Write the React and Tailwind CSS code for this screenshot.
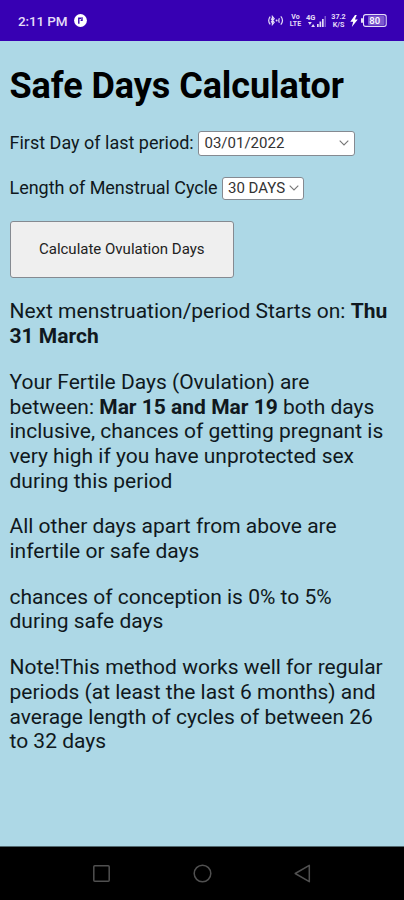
function Chevron() {
  return (
    <svg width="10" height="6" viewBox="0 0 10 6" fill="none" stroke="#777" strokeWidth="1.1">
      <path d="M.7.7 5 5 9.3.7" />
    </svg>
  );
}

function StatusBar() {
  return (
    <header className="flex h-[41px] items-center bg-[#3700b3] pl-[18px] pr-[17px] text-[#e4dcf7]">
      <span className="w-[50px] text-[13.5px] leading-4 font-medium tracking-[-0.12px] whitespace-nowrap">2:11 PM</span>
      <svg className="ml-[6px]" width="13" height="13" viewBox="0 0 13 13">
        <circle cx="6.5" cy="6.5" r="6.4" fill="#fff" />
        <path d="M4.8 9.8V4.2H7M8 3.2v3.2H6.6" fill="none" stroke="#3700b3" strokeWidth="1.4" />
      </svg>
      <div className="ml-auto flex items-center">
        <svg width="16" height="11" viewBox="0 0 16 11" fill="none" stroke="currentColor" strokeWidth="1.2">
          <path d="M2.2 1.6Q-.8 5.5 2.2 9.4M3 3.6l3.2 3.7-1.8 2.2v-8l1.8 2.2L3 7.4M11.4 3.2q-1.2 2.3 0 4.6M12.8 1.4q3.4 4.1 0 8.2" />
          <circle cx="8.6" cy="5.5" r="1" fill="currentColor" stroke="none" />
        </svg>
        <span className="ml-[5px] flex w-[13px] flex-col items-center text-[7px] leading-[7px] font-bold"><span>Vo</span><span>LTE</span></span>
        <div className="ml-[4px] flex items-end">
          <div className="flex w-[11px] flex-col items-start">
            <span className="text-[7.5px] leading-[8px] font-bold">4G</span>
            <svg className="ml-[2px]" width="7" height="5" viewBox="0 0 7 5" fill="currentColor"><path d="M0 0h3.8L1.9 3zM3.2 5H7L5.1 2z" /></svg>
          </div>
          <svg width="9" height="12" viewBox="0 0 9 12" fill="currentColor">
            <path d="M0 9h1.7v3H0zM2.5 6.5h1.7V12H2.5zM5 4h1.7v8H5z" />
            <path d="M7.6 1h1.2v11H7.6z" opacity=".5" />
          </svg>
        </div>
        <span className="ml-[5px] flex w-[15px] flex-col items-center text-[7.2px] leading-[8px] font-bold"><span>37.2</span><span>K/S</span></span>
        <svg className="ml-[4px]" width="8" height="12" viewBox="0 0 8 12"><path d="M5 0 .3 6.8h2.9L1.8 12l6-7.4H4.9L6.8 0z" fill="#fff" /></svg>
        <svg className="ml-[3px]" width="26" height="13" viewBox="0 0 26 13">
          <rect x="2.5" y=".6" width="22.7" height="11.8" rx="2.2" fill="none" stroke="currentColor" strokeWidth="1.1" />
          <rect x="0" y="4" width="2" height="5" rx="1" fill="currentColor" />
          <rect x="7" y="2" width="16.6" height="9" rx="1" fill="currentColor" opacity=".4" />
          <text x="13.7" y="10" textAnchor="middle" fontSize="9.5" fontWeight="500" fill="#fff">80</text>
        </svg>
      </div>
    </header>
  );
}

export default function App() {
  return (
    <div className="flex h-[900px] w-[404px] flex-col overflow-hidden bg-[#add8e6] font-['Roboto',sans-serif] text-[#101820]">
      <StatusBar />
      <main className="flex-1 px-[9.5px] pt-[24px] whitespace-nowrap">
        <h1 className="text-[36px] leading-[42px] font-bold tracking-[-0.06px] text-black">Safe Days Calculator</h1>
        <div className="mt-[23px] flex h-[26px] items-center">
          <label className="w-[188px] text-[18px] leading-[24px]">First Day of last period:</label>
          <button className="flex h-[25px] w-[157px] items-center justify-between rounded-[3px] border border-[#858a91] bg-white pr-[5px] pl-[6px] text-[15px] text-[#333]">
            03/01/2022
            <Chevron />
          </button>
        </div>
        <div className="mt-[20px] flex h-[24px] items-center">
          <label className="w-[212.5px] text-[18px] leading-[24px] tracking-[-0.04px]">Length of Menstrual Cycle</label>
          <button className="flex h-[23px] w-[82px] items-center justify-between rounded-[3px] border border-[#858a91] bg-white pr-[4px] pl-[5px] text-[15px] text-[#333]">
            30 DAYS
            <Chevron />
          </button>
        </div>
        <button className="mt-[21px] block h-[57px] w-[224.5px] rounded-[3px] border border-[#858a91] bg-[#efefef] text-[15px] text-[#222]">
          Calculate Ovulation Days
        </button>
        <section className="mt-[21.4px] flex flex-col gap-[21px] text-[21px] leading-[24.7px]">
          <p>Next menstruation/period Starts on: <b>Thu<br />31 March</b></p>
          <p>Your Fertile Days (Ovulation) are<br />between: <b>Mar 15 and Mar 19</b> both days<br />inclusive, chances of getting pregnant is<br />very high if you have unprotected sex<br />during this period</p>
          <p>All other days apart from above are<br />infertile or safe days</p>
          <p>chances of conception is 0% to 5%<br />during safe days</p>
          <p>Note!This method works well for regular<br />periods (at least the last 6 months) and<br />average length of cycles of between 26<br />to 32 days</p>
        </section>
      </main>
      <nav className="flex h-[54px] items-center justify-between border-t border-[#526970] bg-black pr-[93px] pb-[1px] pl-[92px]">
        <svg width="19" height="19" viewBox="0 0 19 19" fill="none" stroke="#505050" strokeWidth="1.5"><rect x="1.8" y="1.8" width="15.4" height="15.4" rx="1" /></svg>
        <svg width="19" height="19" viewBox="0 0 19 19" fill="none" stroke="#505050" strokeWidth="1.5"><circle cx="9.5" cy="9.5" r="8.3" /></svg>
        <svg width="17" height="19" viewBox="0 0 17 19" fill="none" stroke="#505050" strokeWidth="1.5" strokeLinejoin="round"><path d="M15.3 1.3v16.4L1.2 9.5z" /></svg>
      </nav>
    </div>
  );
}
